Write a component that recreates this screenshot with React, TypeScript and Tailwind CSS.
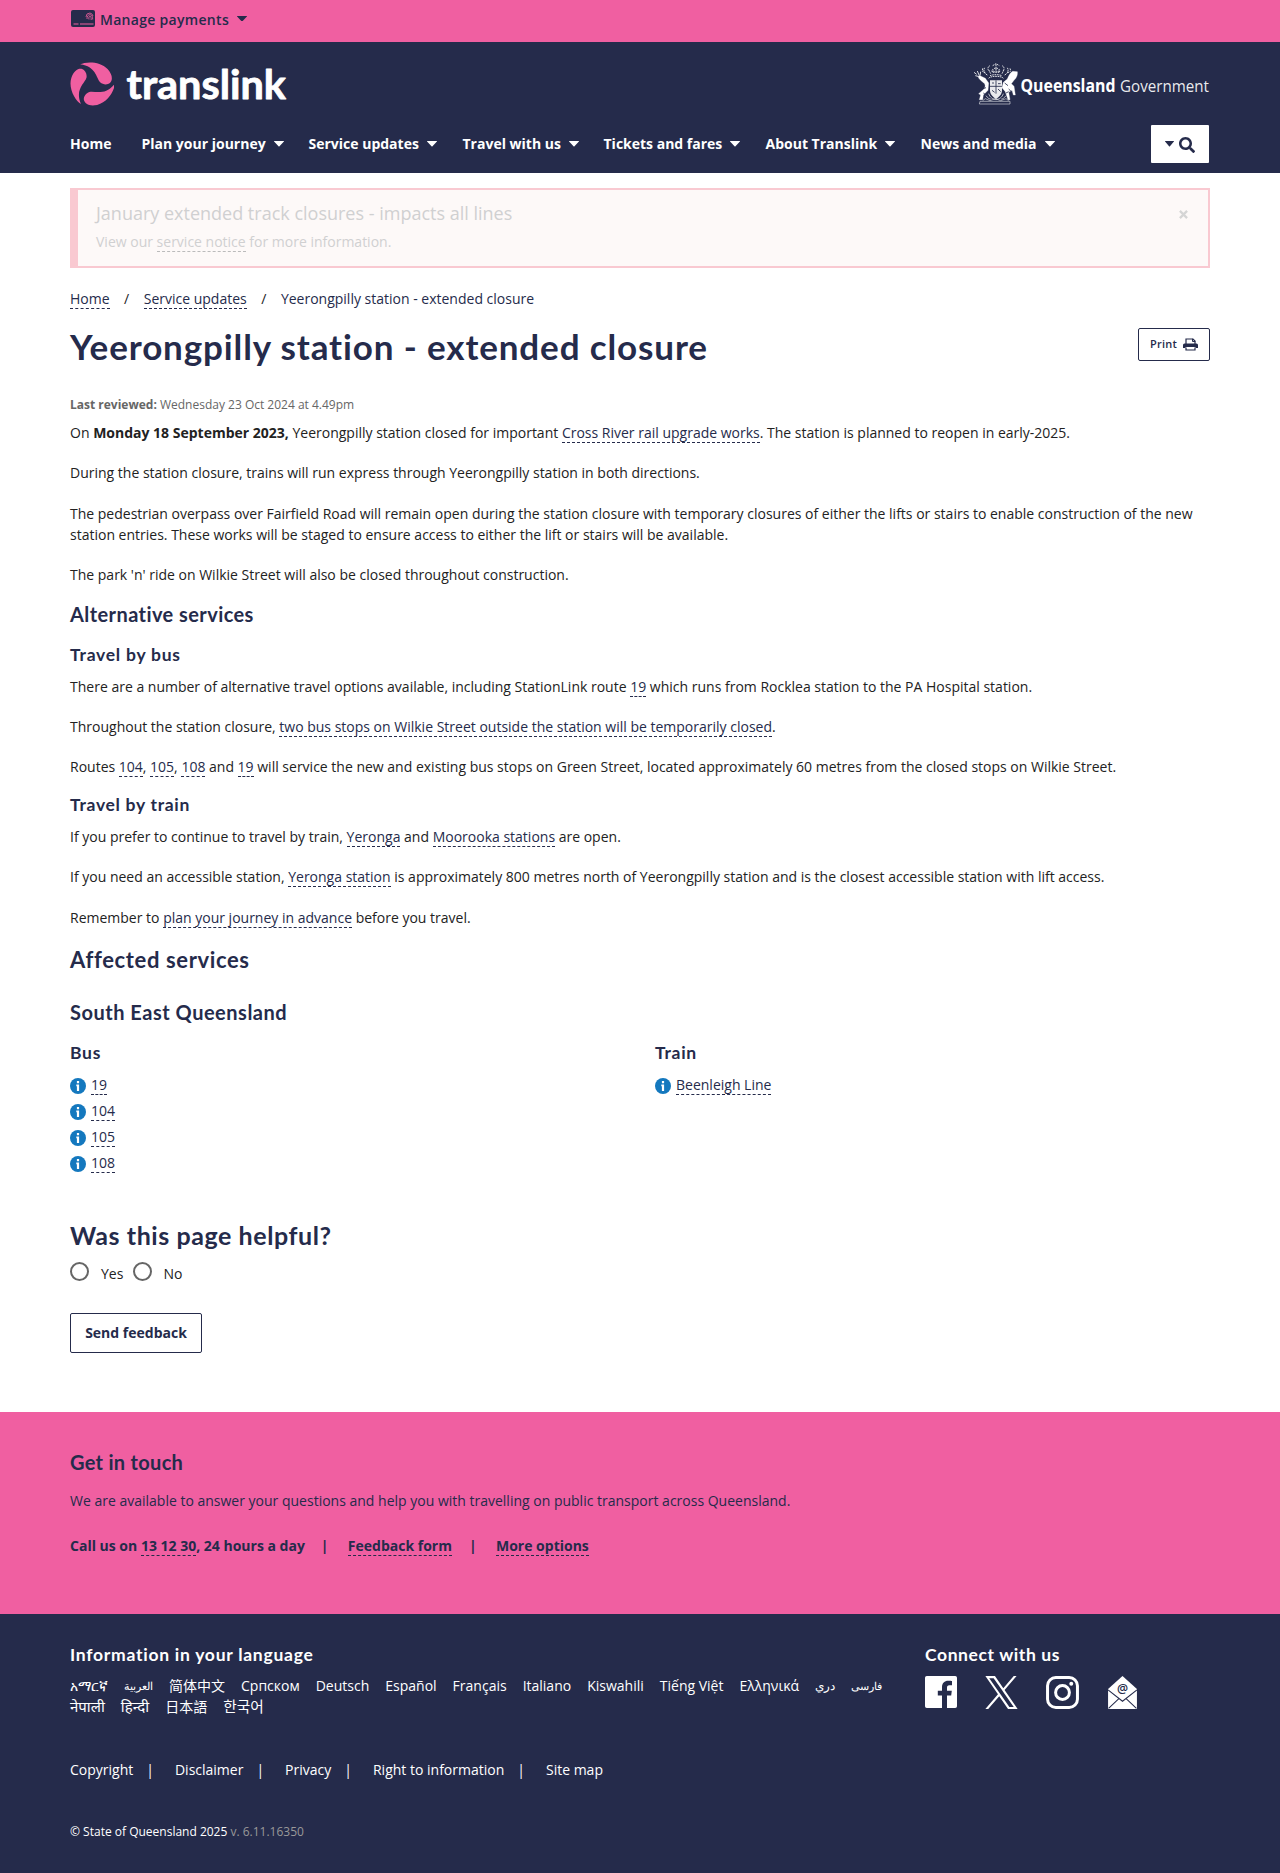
import type { ReactNode } from "react";
import { FaSearch } from "react-icons/fa";

function Caret({ className = "w-[10px]" }: { className?: string }) {
  return (
    <svg viewBox="0 0 10 5.500" preserveAspectRatio="none" className={"h-[5.5px] shrink-0 " + className} fill="currentColor">
      <path d="M.3 0h9.400c.3 0 .4.400.2.600L5.500 5.200a.7.7 0 0 1-1 0L.1.600C-.1.400 0 0 .3 0z" />
    </svg>
  );
}

function A({ children }: { children: ReactNode }) {
  return (
    <a href="#" className="border-b border-dashed border-current text-[#252b4b]">
      {children}
    </a>
  );
}

function P({ children }: { children: ReactNode }) {
  return <p className="mb-[19.3px] leading-[21px]">{children}</p>;
}

function Logo() {
  const blade = "M-35-58C-18-67 24-68 46-44C62-26 61-11 53-3C46 3 33 3 24-5C12-18 12-52-35-58Z";
  return (
    <div className="flex h-[44px] items-center text-white">
      <svg viewBox="-65 -65 130 130" className="h-[44px] w-[44px]" fill="#f05fa1">
        <path d={blade} />
        <path d={blade} transform="rotate(120)" />
        <path d={blade} transform="rotate(240)" />
      </svg>
      <svg viewBox="0 0 180 56" className="ml-[10px] h-[56px] w-[180px]">
        <text x="2.500" y="43" textLength="159.500" lengthAdjust="spacingAndGlyphs" fontFamily="Lato" fontWeight="700" fontSize="40" fill="#fff" stroke="#fff" strokeWidth=".8" strokeLinejoin="round">
          translink
        </text>
      </svg>
    </div>
  );
}

function Crest() {
  return (
    <svg viewBox="0 0 132 126" className="h-[42px] w-[44px]" fill="none" stroke="#fff" strokeWidth="3">
      <path d="M18 115h90v8H16zM26 113l8-6 14 6 16-6 16 6 16-6 8 6" strokeWidth="2" strokeOpacity=".8" />
      <path d="M48 52h36v30c0 12-8 20-18 26-10-6-18-14-18-26z" fill="#fff" fillOpacity=".9" stroke="none" />
      <path d="M48 70h36M66 52v40M54 60h6M72 62h8M54 82l8 6M72 78l8 8" stroke="#252b4b" strokeWidth="2.500" />
      <path d="M12 40c2 8 10 14 20 22 4 8 0 14-6 20l-12 10 6 4-4 14h10l2-14 14-14 2-22-10-14-16-8z" fill="#fff" strokeWidth="1" />
      <path d="M0 28l8 6M4 38l8 2M10 24l6 14M20 26l-2 12" strokeWidth="2.500" />
      <path d="M130 26l-14-1c-9 5-12 15-16 23l-12 10-4 16 10 12 8 24h6l-4-22 10-6 4 14h6l-4-26-8-8 8-10c9-8 11-18 10-26z" fill="#fff" strokeWidth="1" />
      <path d="M92 60l10 8M104 78l8 8M16 60l10 6M24 78l12-4M28 90l8 6M96 90l8-4" stroke="#252b4b" strokeWidth="2.500" />
      <path d="M44 46c4-8 40-8 44 0M48 38c10-4 26-4 36 0M50 32l-6-12M84 32l6-12M58 30l-2-14M74 30l2-14M66 30V4M56 8l10-6 10 6M60 16h12M52 24c8 4 20 4 28 0" strokeDasharray="5 2" strokeWidth="2.500" />
      <path d="M40 36c-8-4-14-12-8-22M92 36c8-4 14-12 8-22M34 28c-8 2-10-4-8-12M100 28c8 2 12-4 8-12M44 22c-4-4-2-12 4-14M88 22c4-4 2-12-4-14" strokeDasharray="5 2" strokeWidth="2.500" />
      <path d="M44 92c4 12 12 16 22 18 10-2 18-6 22-18M36 98c6 8 10 10 14 10M96 98c-6 8-10 10-14 10" strokeWidth="2" />
    </svg>
  );
}

function Printer() {
  return (
    <svg viewBox="0 0 15 13" className="h-[13px] w-[15px]">
      <path d="M3 6V1h7l2 2v3M3 9.500V12h9V9.500" fill="none" stroke="#252b4b" strokeWidth="1.200" />
      <path d="M1.500 5.500h12a1.500 1.500 0 0 1 1.500 1.500v3h-2.500V9h-10v1H0V7a1.500 1.500 0 0 1 1.500-1.500z" fill="#252b4b" />
      <path d="M9.500.8V3.500H12.300" fill="none" stroke="#252b4b" />
    </svg>
  );
}

function InfoLink({ children }: { children: ReactNode }) {
  return (
    <li className="flex h-[26px] items-center">
      <svg viewBox="0 0 16 16" className="mr-[5px] h-4 w-4">
        <circle cx="8" cy="8" r="8" fill="#1478be" />
        <path d="M6.900 3h2.200v2.200H6.900zM6.300 6.500h2.800V13H6.900V8.200h-.6z" fill="#fff" />
      </svg>
      <span className="relative -top-px leading-[21px]">
        <A>{children}</A>
      </span>
    </li>
  );
}

const nav = [
  { label: "Home", w: "w-[71.5px]", caret: false },
  { label: "Plan your journey", w: "w-[167px]", caret: true },
  { label: "Service updates", w: "w-[154px]", caret: true },
  { label: "Travel with us", w: "w-[141px]", caret: true },
  { label: "Tickets and fares", w: "w-[162px]", caret: true },
  { label: "About Translink", w: "w-[155px]", caret: true },
  { label: "News and media", w: "w-[150px]", caret: true },
];

const languages = [
  [
    { t: "አማርኛ", c: "" },
    { t: "العربية", c: "text-[11.3px]" },
    { t: "简体中文", c: "" },
    { t: "Српском", c: "" },
    { t: "Deutsch", c: "" },
    { t: "Español", c: "" },
    { t: "Français", c: "" },
    { t: "Italiano", c: "" },
    { t: "Kiswahili", c: "" },
    { t: "Tiếng Việt", c: "" },
    { t: "Ελληνικά", c: "" },
    { t: "دري", c: "text-[12px]" },
    { t: "فارسی", c: "text-[11px]" },
  ],
  [
    { t: "नेपाली", c: "text-[15px]" },
    { t: "हिन्दी", c: "text-[15px]" },
    { t: "日本語", c: "" },
    { t: "한국어", c: "text-[14.7px]" },
  ],
];

const footerLinks = ["Copyright", "Disclaimer", "Privacy", "Right to information", "Site map"];

const h = "font-['Lato'] font-bold text-[#252b4b] ";

export default function App() {
  return (
    <div className="h-[1873px] w-[1280px] overflow-hidden bg-white font-['Open_Sans','Noto_Sans','Noto_Sans_CJK_SC',sans-serif] text-[14px] text-[#222]">
      <div className="flex h-[42px] items-center bg-[#f05fa1] px-[71px] pb-[5px] text-[#252b4b]">
        <svg viewBox="0 0 24 17" className="h-[17px] w-6">
          <rect width="24" height="17" rx="2" fill="#252b4b" />
          <path d="M2.500 14h5M9 14h13.500" stroke="#f05fa1" strokeWidth="1" />
          <path d="M15 7a4 4 0 0 1 4-4 4 4 0 0 1 3 3M16 9c-.2-2.800 1.300-4.300 3-4.300s2.700 1.500 2.700 4.800M18 9.500c-.5-2 0-3.200 1-3.200s1.200 1 1.200 3.700" fill="none" stroke="#f05fa1" strokeWidth=".8" />
        </svg>
        <span className="ml-[5px] mt-[2px] font-semibold tracking-[0.3px]">Manage payments</span>
        <Caret className="ml-2 w-[10px]" />
      </div>

      <header className="h-[131px] bg-[#252b4b] px-[70px] text-white">
        <div className="flex h-[82px] items-start justify-between">
          <div className="pt-5">
            <Logo />
          </div>
          <div className="flex items-center pt-[21px]">
            <Crest />
            <svg viewBox="0 0 192 42" className="h-[42px] w-[192px] overflow-visible">
              <text x="2.500" y="29" textLength="95" lengthAdjust="spacingAndGlyphs" fontFamily="Open Sans" fontWeight="700" fontSize="17" fill="#fff">Queensland</text>
              <text x="102" y="29" textLength="89" lengthAdjust="spacingAndGlyphs" fontFamily="Open Sans" fontWeight="400" fontSize="17" fill="#fff" fillOpacity=".92">Government</text>
            </svg>
          </div>
        </div>
        <nav className="flex h-[40px] items-center font-bold">
          {nav.map((n) => (
            <a key={n.label} href="#" className={"flex shrink-0 items-center whitespace-nowrap pb-[2px] " + n.w}>
              {n.label}
              {n.caret && <Caret className="ml-2 mt-[2px] w-[10px]" />}
            </a>
          ))}
          <button className="ml-auto mr-px flex h-[38px] w-[58px] items-center justify-center gap-[5px] rounded-[1px] bg-white text-[#252b4b]">
            <Caret className="w-[9px]" />
            <FaSearch className="mt-[2px] h-4 w-4" />
          </button>
        </nav>
      </header>

      <main className="h-[1239px] px-[70px] pt-[15px]">
        <div className="flex h-[80px] justify-between border-2 border-l-8 border-[#f9c9d1] bg-[#fdf9f8] pl-[18px] pr-5 text-[#d0d0d1]">
          <div>
            <h2 className="mt-[10px] text-[18px] leading-[26px]">January extended track closures - impacts all lines</h2>
            <p className="mt-[5px] leading-[21px]">
              View our <a href="#" className="border-b border-dashed border-[#bbb]">service notice</a> for more information.
            </p>
          </div>
          <svg viewBox="0 0 10 10" className="mt-5 h-[9px] w-[9px]" stroke="#d5d5d5" strokeWidth="2.500">
            <path d="M1 1l8 8M9 1L1 9" />
          </svg>
        </div>

        <div className="mt-5 flex leading-[21px]">
          <span><A>Home</A></span>
          <span className="mx-[14.5px]">/</span>
          <span><A>Service updates</A></span>
          <span className="mx-[14.5px]">/</span>
          <span className="text-[#252b4b]">Yeerongpilly station - extended closure</span>
        </div>

        <div className="mt-[15px] flex h-[56px] justify-between">
          <h1 className={h + "text-[35px] leading-[44px] tracking-[0.87px]"}>Yeerongpilly station - extended closure</h1>
          <button className="mt-[4px] flex h-[33px] w-[72px] items-center justify-center gap-[6px] rounded-[2px] border border-[#252b4b] text-[11px] font-semibold text-[#252b4b]">
            <span className="tracking-[0.2px]">Print</span> <Printer />
          </button>
        </div>

        <p className="mt-[16px] text-[12px] leading-[18px] text-[#666]">
          <b>Last reviewed:</b> Wednesday 23 Oct 2024 at 4.49pm
        </p>
        <div className="mt-[8px]">
          <P>On <b>Monday 18 September 2023,</b> Yeerongpilly station closed for important <A>Cross River rail upgrade works</A>. The station is planned to reopen in early-2025.</P>
          <P>During the station closure, trains will run express through Yeerongpilly station in both directions.</P>
          <P>The pedestrian overpass over Fairfield Road will remain open during the station closure with temporary closures of either the lifts or stairs to enable construction of the new<br />station entries. These works will be staged to ensure access to either the lift or stairs will be available.</P>
          <P>The park 'n' ride on Wilkie Street will also be closed throughout construction.</P>
        </div>
        <h2 className={h + "text-[20px] leading-[24px] -mt-[2.5px] tracking-[0.42px]"}>Alternative services</h2>
        <h3 className={h + "mt-[17px] mb-[9px] text-[17.5px] leading-[24px] tracking-[0.75px]"}>Travel by bus</h3>
        <P>There are a number of alternative travel options available, including StationLink route <A>19</A> which runs from Rocklea station to the PA Hospital station.</P>
        <P>Throughout the station closure, <A>two bus stops on Wilkie Street outside the station will be temporarily closed</A>.</P>
        <P>Routes <A>104</A>, <A>105</A>, <A>108</A> and <A>19</A> will service the new and existing bus stops on Green Street, located approximately 60 metres from the closed stops on Wilkie Street.</P>
        <h3 className={h + "-mt-[4px] mb-[9px] text-[17.5px] leading-[24px] tracking-[0.7px]"}>Travel by train</h3>
        <P>If you prefer to continue to travel by train, <A>Yeronga</A> and <A>Moorooka stations</A> are open.</P>
        <P>If you need an accessible station, <A>Yeronga station</A> is approximately 800 metres north of Yeerongpilly station and is the closest accessible station with lift access.</P>
        <div className="pt-[0.5px]">
          <P>Remember to <A>plan your journey in advance</A> before you travel.</P>
        </div>

        <h2 className={h + "-mt-[1px] text-[22px] leading-[28px] tracking-[0.63px]"}>Affected services</h2>
        <h3 className={h + "mt-[25px] text-[20px] leading-[26px] tracking-[0.51px]"}>South East Queensland</h3>
        <div className="mt-[16px] grid grid-cols-[585px_1fr]">
          <div>
            <h4 className={h + "mb-[8px] text-[17.5px] leading-[24px] tracking-[0.7px]"}>Bus</h4>
            <ul>
              <InfoLink>19</InfoLink>
              <InfoLink>104</InfoLink>
              <InfoLink>105</InfoLink>
              <InfoLink>108</InfoLink>
            </ul>
          </div>
          <div>
            <h4 className={h + "mb-[8px] text-[17.5px] leading-[24px] tracking-[0.7px]"}>Train</h4>
            <ul>
              <InfoLink>Beenleigh Line</InfoLink>
            </ul>
          </div>
        </div>

        <h2 className={h + "mt-[42px] text-[25px] leading-[32px] tracking-[0.57px]"}>Was this page helpful?</h2>
        <div className="mt-[10px] flex h-[21px] items-center">
          <span className="h-[19px] w-[19px] rounded-full border-2 border-[#666]" />
          <span className="ml-[12px] mt-1">Yes</span>
          <span className="ml-[10px] h-[19px] w-[19px] rounded-full border-2 border-[#666]" />
          <span className="ml-[11px] mt-1">No</span>
        </div>
        <button className="mt-[31px] h-[40px] w-[132px] rounded-[2px] border border-[#252b4b] font-bold text-[#252b4b]">Send feedback</button>
      </main>

      <section className="h-[202px] bg-[#f05fa1] px-[70px] pt-[37px] text-[#252b4b]">
        <h2 className={h + "text-[20px] leading-[26px] tracking-[0.3px]"}>Get in touch</h2>
        <p className="mt-[15px] leading-[21px]">We are available to answer your questions and help you with travelling on public transport across Queensland.</p>
        <div className="mt-[24px] flex font-bold leading-[21px]">
          <span>Call us on <A>13 12 30</A>, 24 hours a day</span>
          <span className="ml-[16px] mr-[17px] w-[10px]">|</span>
          <span><A>Feedback form</A></span>
          <span className="mx-[17px] w-[10px]">|</span>
          <span><A>More options</A></span>
        </div>
      </section>

      <footer className="h-[259px] bg-[#252b4b] px-[70px] pt-[29px] text-white">
        <div className="grid h-[116px] grid-cols-[855px_1fr]">
          <div>
            <h3 className="font-['Lato'] text-[17.5px] font-bold leading-[24px] tracking-[0.74px]">Information in your language</h3>
            <div className="mt-[8px]">
              {languages.map((row, i) => (
                <div key={i} className="flex h-[21px] items-center gap-[16px] whitespace-nowrap leading-[21px]">
                  {row.map((l) => (
                    <a key={l.t} href="#" className={l.c}>{l.t}</a>
                  ))}
                </div>
              ))}
            </div>
          </div>
          <div>
            <h3 className="font-['Lato'] text-[17.5px] font-bold leading-[24px] tracking-[0.6px]">Connect with us</h3>
            <div className="mt-[9px] flex gap-[28px]">
              <svg viewBox="0 0 32 32" className="h-8 w-8">
                <path fill="#fff" d="M1.800 0h28.400A1.800 1.800 0 0 1 32 1.800v28.400a1.800 1.800 0 0 1-1.800 1.800H22V19.600h4.200l.6-4.900H22v-3c0-1.400.4-2.400 2.400-2.400H27V5c-.5-.1-2-.2-3.800-.2-3.700 0-6.200 2.200-6.200 6.400v3.500h-4.200v4.900H17V32H1.800A1.800 1.800 0 0 1 0 30.200V1.800A1.800 1.800 0 0 1 1.800 0z" />
              </svg>
              <svg viewBox="0 0 1200 1227" className="h-[33px] w-[33px]">
                <path fill="#fff" d="M714.163 519.284L1160.890 0H1055.030L667.137 450.887L357.328 0H0L468.492 681.821L0 1226.370H105.866L515.491 750.218L842.672 1226.370H1200L714.137 519.284H714.163ZM569.165 687.828L521.697 619.934L144.011 79.694H306.615L611.412 515.685L658.880 583.579L1055.080 1150.300H892.476L569.165 687.854V687.828Z" />
              </svg>
              <svg viewBox="0 0 32 32" className="h-[33px] w-[33px]" fill="none" stroke="#fff" strokeWidth="2.900">
                <rect x="1.500" y="1.500" width="29" height="29" rx="8" />
                <circle cx="16" cy="16" r="6.700" />
                <circle cx="24.500" cy="7.500" r="1.900" fill="#fff" stroke="none" />
              </svg>
              <svg viewBox="0 0 28 32" className="ml-[1px] h-[33px] w-[29px]">
                <path fill="#fff" d="M14 0L28 12.500V32H0V12.500z" />
                <path fill="none" stroke="#252b4b" d="M0 13.500L14 24.500 28 13.500M.5 31.500L10.500 22M27.500 31.500L17.500 22" />
                <text x="14" y="16" textAnchor="middle" fontFamily="Open Sans" fontWeight="600" fontSize="12" fill="#252b4b">@</text>
              </svg>
            </div>
          </div>
        </div>
        <div className="flex leading-[21px]">
          {footerLinks.map((l, i) => (
            <span key={l} className="flex">
              <a href="#">{l}</a>
              {i < footerLinks.length - 1 && <span className="ml-[13px] mr-[16.7px] w-[12px]">|</span>}
            </span>
          ))}
        </div>
        <p className="mt-[43px] text-[12px] leading-[18px]">
          © State of Queensland 2025 <span className="text-[#999]">v. 6.11.16350</span>
        </p>
      </footer>
    </div>
  );
}
